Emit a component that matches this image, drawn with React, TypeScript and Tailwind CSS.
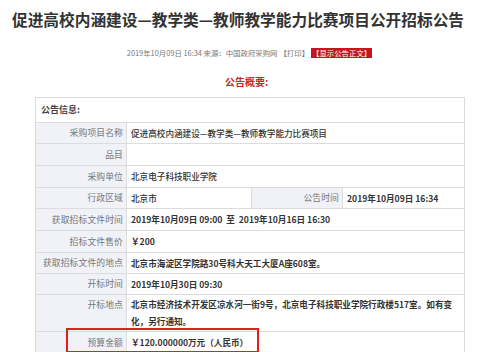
import React from "react";

const font = { fontFamily: '"Noto Sans CJK SC", "Noto Sans", sans-serif' };

type Row = {
  label: string;
  value: React.ReactNode;
  h: string;
};

function Label({ children, top }: { children: React.ReactNode; top?: boolean }) {
  return (
    <td
      className={`w-[91px] whitespace-nowrap border border-[#dcdcdc] bg-[#f0f2f8] pr-[3px] text-right text-[8.8px] tracking-[0.1px] text-[#777] ${
        top ? "pt-[3px] align-top" : "align-middle"
      }`}
    >
      {children}
    </td>
  );
}

const cell = "border border-[#dcdcdc] pl-[4px] text-[8.6px] text-[#333]";

export default function App() {
  const rows: Row[] = [
    { label: "采购项目名称", value: "促进高校内涵建设—教学类—教师教学能力比赛项目", h: "h-[21px]" },
    { label: "品目", value: "", h: "h-[22px]" },
    { label: "采购单位", value: "北京电子科技职业学院", h: "h-[22px]" },
  ];

  return (
    <div className="h-[352px] w-[499px] overflow-hidden bg-white text-[#333]" style={font}>
      <h1 className="whitespace-nowrap pl-[12px] pt-[9px] text-[15.7px] font-bold leading-[22px] text-[#333]">
        促进高校内涵建设—教学类—教师教学能力比赛项目公开招标公告
      </h1>
      <div className="mt-[17px] flex items-center justify-center gap-[2px] text-[7.4px] leading-[10px] text-[#777]">
        <span>2019年10月09日 16:34 来源：中国政府采购网</span>
        <span>【打印】</span>
        <span className="bg-[#c4161c] px-[1px] text-white">【显示公告正文】</span>
      </div>
      <div className="mt-[18px] pl-[225px] text-[10px] font-bold leading-[12px] text-[#c4282d]">公告概要:</div>
      <table className="ml-[35px] mt-[9px] w-[429px] table-fixed border-collapse">
        <colgroup>
          <col className="w-[91px]" />
          <col className="w-[125px]" />
          <col className="w-[91px]" />
          <col className="w-[122px]" />
        </colgroup>
        <tbody>
          <tr className="h-[25px]">
            <td colSpan={4} className="border border-[#dcdcdc] pl-[5px] text-[9px] font-bold text-[#444]">
              公告信息:
            </td>
          </tr>
          {rows.map((r) => (
            <tr key={r.label} className={r.h}>
              <Label>{r.label}</Label>
              <td colSpan={3} className={`${cell} font-medium`}>
                {r.value}
              </td>
            </tr>
          ))}
          <tr className="h-[21px]">
            <Label>行政区域</Label>
            <td className={`${cell} font-medium`}>北京市</td>
            <Label>公告时间</Label>
            <td className={`${cell} font-bold`}>2019年10月09日 16:34</td>
          </tr>
          <tr className="h-[22px]">
            <Label>获取招标文件时间</Label>
            <td colSpan={3} className={`${cell} font-bold`}>
              2019年10月09日 09:00 &nbsp;至 &nbsp;2019年10月16日 16:30
            </td>
          </tr>
          <tr className="h-[22px]">
            <Label>招标文件售价</Label>
            <td colSpan={3} className={`${cell} font-bold`}>￥200</td>
          </tr>
          <tr className="h-[21px]">
            <Label>获取招标文件的地点</Label>
            <td colSpan={3} className={`${cell} font-semibold`}>
              北京市海淀区学院路30号科大天工大厦A座608室。
            </td>
          </tr>
          <tr className="h-[21px]">
            <Label>开标时间</Label>
            <td colSpan={3} className={`${cell} font-bold`}>2019年10月30日 09:30</td>
          </tr>
          <tr className="h-[37px]">
            <Label top>开标地点</Label>
            <td colSpan={3} className={`${cell} whitespace-nowrap pr-[2px] pt-[1px] align-top font-semibold leading-[17px]`}>
              北京市经济技术开发区凉水河一街9号，北京电子科技职业学院行政楼517室。如有变
              <br />
              化，另行通知。
            </td>
          </tr>
          <tr className="h-[22px]">
            <Label>
              <span className="relative">
                预算金额
                <span className="pointer-events-none absolute left-[-21px] top-[-8px] h-[25px] w-[193px] border-2 border-[#e0201c]" />
              </span>
            </Label>
            <td colSpan={3} className={`${cell} font-bold`}>
              ￥120.000000万元（人民币）
            </td>
          </tr>
        </tbody>
      </table>
    </div>
  );
}
